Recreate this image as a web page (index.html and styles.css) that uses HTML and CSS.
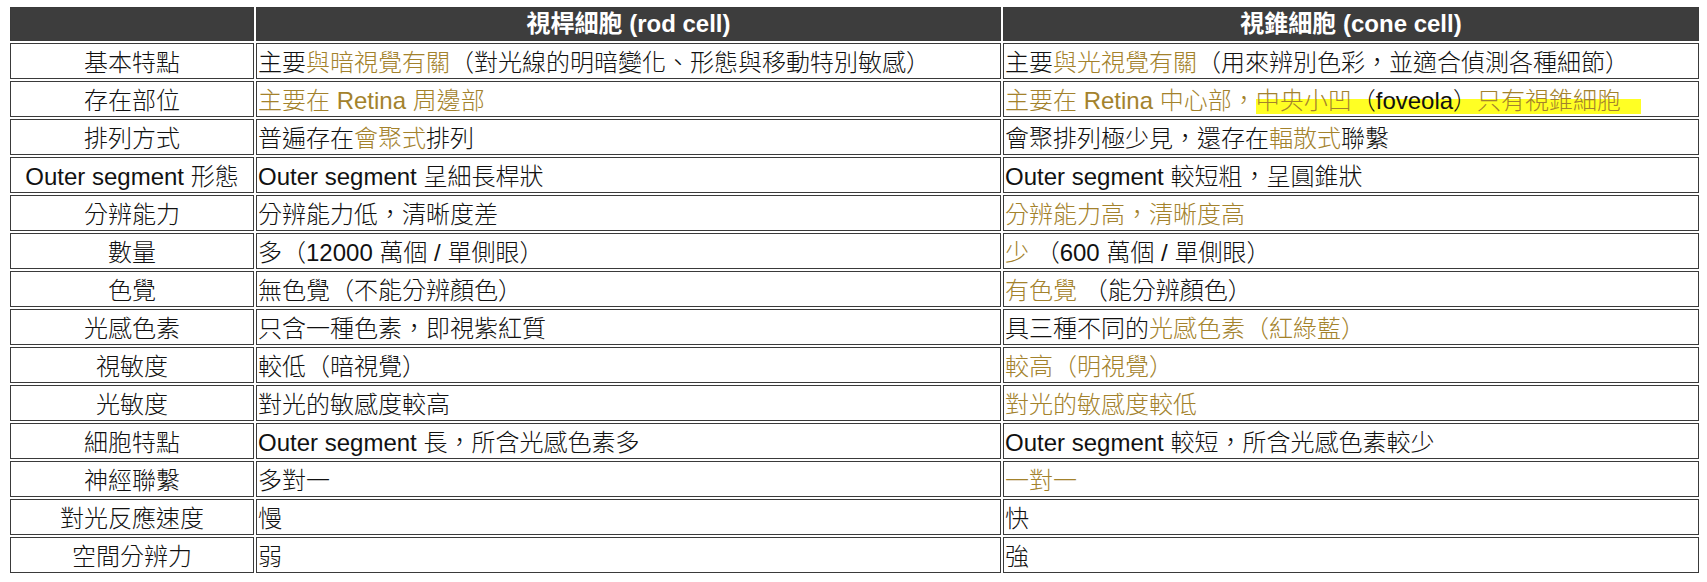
FILE: index.html
```html
<!DOCTYPE html>
<html lang="zh-Hant">
<head>
<meta charset="utf-8">
<title>視桿細胞與視錐細胞比較</title>
<link rel="stylesheet" href="styles.css">
</head>
<body>
<table class="cmp">
  <thead>
    <tr>
      <th class="c1"></th>
      <th class="c2">視桿細胞 (rod cell)</th>
      <th class="c3">視錐細胞 (cone cell)</th>
    </tr>
  </thead>
  <tbody>
    <tr>
      <td class="k">基本特點</td>
      <td>主要<span class="g">與暗視覺有關</span>（對光線的明暗變化、形態與移動特別敏感）</td>
      <td>主要<span class="g">與光視覺有關</span>（用來辨別色彩，並適合偵測各種細節）</td>
    </tr>
    <tr>
      <td class="k">存在部位</td>
      <td><span class="g">主要在 Retina 周邊部</span></td>
      <td><span class="g">主要在 Retina 中心部，</span><span class="hl"><span class="g">中央小凹</span>（foveola）<span class="g">只有視錐細胞</span></span></td>
    </tr>
    <tr>
      <td class="k">排列方式</td>
      <td>普遍存在<span class="g">會聚式</span>排列</td>
      <td>會聚排列極少見，還存在<span class="g">輻散式</span>聯繫</td>
    </tr>
    <tr>
      <td class="k">Outer segment 形態</td>
      <td>Outer segment 呈細長桿狀</td>
      <td>Outer segment 較短粗，呈圓錐狀</td>
    </tr>
    <tr>
      <td class="k">分辨能力</td>
      <td>分辨能力低，清晰度差</td>
      <td><span class="g">分辨能力高，清晰度高</span></td>
    </tr>
    <tr>
      <td class="k">數量</td>
      <td>多（12000 萬個 / 單側眼）</td>
      <td><span class="g">少</span> （600 萬個 / 單側眼）</td>
    </tr>
    <tr>
      <td class="k">色覺</td>
      <td>無色覺（不能分辨顏色）</td>
      <td><span class="g">有色覺</span> （能分辨顏色）</td>
    </tr>
    <tr>
      <td class="k">光感色素</td>
      <td>只含一種色素，即視紫紅質</td>
      <td>具三種不同的<span class="g">光感色素（紅綠藍）</span></td>
    </tr>
    <tr>
      <td class="k">視敏度</td>
      <td>較低（暗視覺）</td>
      <td><span class="g">較高（明視覺）</span></td>
    </tr>
    <tr>
      <td class="k">光敏度</td>
      <td>對光的敏感度較高</td>
      <td><span class="g">對光的敏感度較低</span></td>
    </tr>
    <tr>
      <td class="k">細胞特點</td>
      <td>Outer segment 長，所含光感色素多</td>
      <td>Outer segment 較短，所含光感色素較少</td>
    </tr>
    <tr>
      <td class="k">神經聯繫</td>
      <td>多對一</td>
      <td><span class="g">一對一</span></td>
    </tr>
    <tr>
      <td class="k">對光反應速度</td>
      <td>慢</td>
      <td>快</td>
    </tr>
    <tr>
      <td class="k">空間分辨力</td>
      <td>弱</td>
      <td>強</td>
    </tr>
  </tbody>
</table>
</body>
</html>
```

FILE: styles.css
```css
html, body {
  margin: 0;
  padding: 0;
  background: #ffffff;
}

body {
  padding: 5px 8px 0;
  font-family: "Liberation Sans", "Noto Sans CJK TC", sans-serif;
  font-size: 24px;
  color: #111111;
}

.cmp {
  width: 1693px;
  table-layout: fixed;
  border-collapse: separate;
  border-spacing: 2px;
  margin: 0;
}

.cmp th,
.cmp td {
  box-sizing: border-box;
  border: 1px solid #3a3a3a;
  font-weight: 300;
}

.cmp th {
  background: #3d3d3d;
  color: #ffffff;
  font-weight: 700;
  text-align: center;
  height: 34px;
  padding: 0 1px;
  line-height: 32px;
}

.cmp th.c1 { width: 244px; }
.cmp th.c2 { width: 745px; }
.cmp th.c3 { width: 696px; }

.cmp td {
  padding: 3px 1px 0;
  line-height: 31px;
  text-align: left;
  white-space: nowrap;
  vertical-align: top;
}

.cmp td.k {
  text-align: center;
}

.g {
  color: #a3822c;
}

.hl {
  padding-right: 20px;
  background: linear-gradient(to bottom, transparent 0, transparent 44%, #ffff24 44%, #ffff24 100%);
}
```
